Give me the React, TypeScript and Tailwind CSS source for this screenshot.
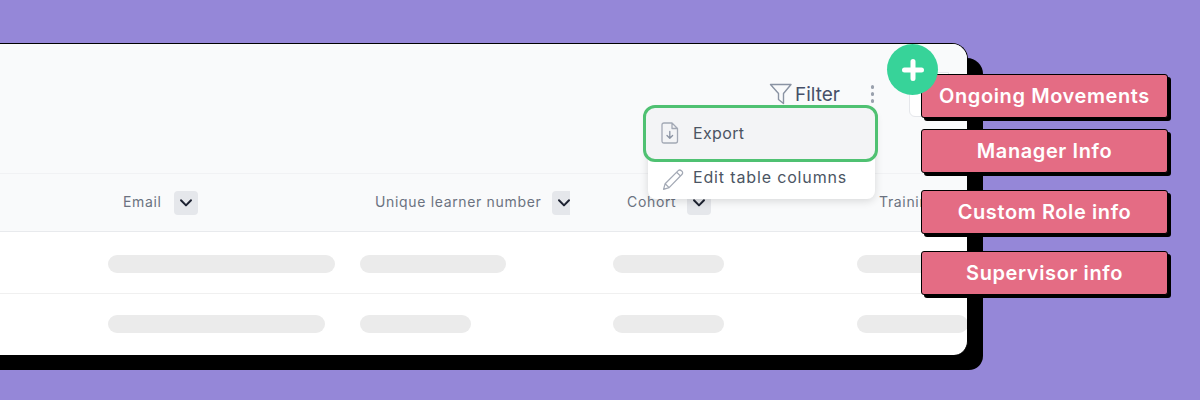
import React from "react";

const font = { fontFamily: "Inter, 'Noto Sans', sans-serif" };

function Chevron({ className = "" }: { className?: string }) {
  return (
    <svg width="14" height="10" viewBox="0 0 14 10" fill="none" className={className}>
      <path d="M2 2.2 L7 7.4 L12 2.2" stroke="#1f2433" strokeWidth="2" strokeLinecap="round" strokeLinejoin="round" />
    </svg>
  );
}

function Head({ label, w, pl, gap, clip }: { label: string; w: string; pl: string; gap: string; clip?: boolean }) {
  return (
    <div className={`flex shrink-0 items-center ${w} ${pl} ${gap}`}>
      <span className="-translate-y-px text-[14px] tracking-[0.66px] whitespace-nowrap text-[#6b7280]">{label}</span>
      {clip ? (
        <span className="flex h-6 w-[18px] items-center overflow-hidden rounded-l-[4px] bg-[#e5e7eb] pl-[5px]">
          <Chevron className="shrink-0" />
        </span>
      ) : (
        <span className="flex h-6 w-6 items-center justify-center rounded-[4px] bg-[#e5e7eb]">
          <Chevron />
        </span>
      )}
    </div>
  );
}

function Bar({ w, col }: { w: string; col: string }) {
  return (
    <div className={`shrink-0 ${col}`}>
      <div className={`h-[18px] rounded-full bg-[#ebebeb] ${w}`} />
    </div>
  );
}

function Pill({ label }: { label: string }) {
  return (
    <div className="flex h-11 w-[247px] items-center justify-center rounded-[3px] border border-black bg-[#e46c84] pb-[1px] text-[20px] font-semibold tracking-[0.6px] whitespace-nowrap text-white shadow-[3px_3px_0_#000]">
      {label}
    </div>
  );
}

export default function App() {
  return (
    <div className="relative h-[400px] w-[1200px] overflow-hidden bg-[#9587d8] pt-[43px]" style={font}>
      <div className="-ml-[40px] h-[312px] w-[1008px] overflow-hidden rounded-tr-[16px] rounded-br-[14px] border-t border-r border-t-black border-r-black bg-white pl-[40px] shadow-[15px_15px_0_#000]">
        <div className="-ml-[40px] flex h-[129px] justify-end bg-[#f9fafb] pt-[38px]">
          <div className="flex h-6 items-center">
            <svg width="24" height="22" viewBox="0 0 24 22" fill="none" className="mr-[2px]">
              <path d="M1.5 1.5 H22 L14.5 10.5 V20.5 L9.5 16.5 V10.5 Z" stroke="#8a93a3" strokeWidth="1.4" strokeLinejoin="round" />
            </svg>
            <span className="translate-y-px text-[19px] text-[#475069]">Filter</span>
            <span className="mr-[93px] ml-[31px] flex flex-col gap-[3px]">
              <i className="block h-[4px] w-[3px] rounded-full bg-[#9aa1ad]" />
              <i className="block h-[4px] w-[3px] rounded-full bg-[#9aa1ad]" />
              <i className="block h-[4px] w-[3px] rounded-full bg-[#9aa1ad]" />
            </span>
          </div>
        </div>
        <div className="-ml-[40px] flex h-[59px] overflow-hidden border-t border-b border-t-[#f1f2f4] border-b-[#e8eaed] bg-[#f9fafb] pl-[148px]">
          <Head label="Email" w="w-[252px]" pl="pl-[15px]" gap="gap-[12px]" />
          <Head label="Unique learner number" w="w-[253px]" pl="pl-[15px]" gap="gap-[11px]" clip />
          <Head label="Cohort" w="w-[244px]" pl="pl-[14px]" gap="gap-[11px]" />
          <Head label="Training" w="w-[100px]" pl="pl-[22px]" gap="gap-[12px]" />
        </div>
        <div className="-ml-[40px] flex h-[62px] border-b border-b-[#f0f0f0] pt-[23px] pl-[148px]">
          <Bar col="w-[252px]" w="w-[227px]" />
          <Bar col="w-[253px]" w="w-[146px]" />
          <Bar col="w-[244px]" w="w-[111px]" />
          <Bar col="w-[111px]" w="w-[111px]" />
        </div>
        <div className="-ml-[40px] flex h-[61px] pt-[21px] pl-[148px]">
          <Bar col="w-[252px]" w="w-[217px]" />
          <Bar col="w-[253px]" w="w-[111px]" />
          <Bar col="w-[244px]" w="w-[111px]" />
          <Bar col="w-[111px]" w="w-[111px]" />
        </div>
      </div>

      <div className="absolute top-[72px] left-[909px] h-[45px] w-[40px] rounded-l-[6px] border border-[#e5e7eb] bg-white" />

      <div className="absolute top-[110px] left-[648px] h-[89px] w-[227px] rounded-[8px] bg-white shadow-[0_2px_8px_rgba(0,0,0,0.14)]">
        <div className="absolute top-[50px] left-[14px] flex h-[36px] items-center">
          <svg width="23" height="23" viewBox="0 0 22 22" fill="none" className="translate-y-[1px]">
            <path d="M1.5 20.5 L3 15 L15.5 2.5 Q17 1.2 18.8 2.8 Q20.6 4.6 19 6.2 L6.8 18.8 Z M3 15 L6.8 18.8 M14 4 L17.8 7.8" stroke="#a3a9b5" strokeWidth="1.2" strokeLinejoin="round" />
          </svg>
          <span className="ml-[8px] -translate-y-px text-[16px] tracking-[0.85px] whitespace-nowrap text-[#4b5563]">Edit table columns</span>
        </div>
      </div>

      <div className="absolute top-[105px] left-[643px] flex h-[57px] w-[235px] items-center rounded-[12px] border-[3px] border-[#4fc172] bg-[#f3f4f6] pl-[15px]">
        <svg width="18" height="22" viewBox="0 0 18 22" fill="none" className="-translate-y-px">
          <path d="M3 1 H11 L16.5 6.5 V19 Q16.5 21 14.5 21 H3 Q1 21 1 19 V3 Q1 1 3 1 Z M11 1 V6.5 H16.5" stroke="#a3a9b5" strokeWidth="1.3" strokeLinejoin="round" />
          <path d="M8.8 9.5 V16 M6 13.5 L8.8 16.3 L11.6 13.5" stroke="#8a93a3" strokeWidth="1.3" strokeLinecap="round" strokeLinejoin="round" />
        </svg>
        <span className="ml-[14px] -translate-y-px text-[16px] tracking-[0.35px] text-[#4b5563]">Export</span>
      </div>

      <div className="absolute top-[74px] left-[921px] flex flex-col gap-[11px]">
        <Pill label="Ongoing Movements" />
        <div className="flex flex-col gap-[17px]">
          <Pill label="Manager Info" />
          <Pill label="Custom Role info" />
          <Pill label="Supervisor info" />
        </div>
      </div>

      <div className="absolute top-[44px] left-[887px] flex h-[51px] w-[51px] items-center justify-center rounded-full bg-[#37d399]">
        <svg width="24" height="24" viewBox="0 0 24 24" fill="none">
          <path d="M12 3.5 V20.5 M3.5 12 H20.5" stroke="#fff" strokeWidth="5" strokeLinecap="round" />
        </svg>
      </div>
    </div>
  );
}
